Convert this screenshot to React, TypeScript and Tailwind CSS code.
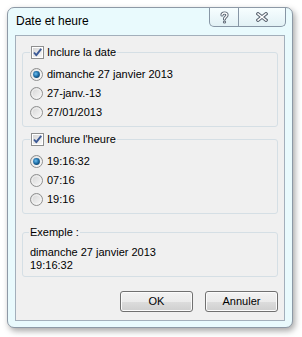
const dateFormats = ["dimanche 27 janvier 2013", "27-janv.-13", "27/01/2013"];
const timeFormats = ["19:16:32", "07:16", "19:16"];

function Radio({ checked }: { checked: boolean }) {
  return (
    <svg width="13" height="13" viewBox="0 0 13 13" className="shrink-0">
      <defs>
        <linearGradient id="radioFill" x1="0" y1="0" x2="1" y2="1">
          <stop offset="0" stopColor="#d2d2d2" />
          <stop offset="1" stopColor="#fbfbfb" />
        </linearGradient>
        <radialGradient id="radioDot" cx="0.4" cy="0.4" r="0.7">
          <stop offset="0" stopColor="#6ec0f0" />
          <stop offset="0.55" stopColor="#1f6fa8" />
          <stop offset="1" stopColor="#0d3f66" />
        </radialGradient>
      </defs>
      <circle cx="6.5" cy="6.5" r="6" fill="url(#radioFill)" stroke="#8e8f8f" />
      <circle cx="6.5" cy="6.5" r="4.5" fill="none" stroke="#f4f4f4" strokeWidth="0.8" />
      {checked && <circle cx="6.5" cy="6.5" r="3.4" fill="url(#radioDot)" />}
    </svg>
  );
}

function Checkbox() {
  return (
    <svg width="13" height="13" viewBox="0 0 13 13" className="shrink-0">
      <defs>
        <linearGradient id="checkFill" x1="0" y1="0" x2="1" y2="1">
          <stop offset="0" stopColor="#d6d6d6" />
          <stop offset="1" stopColor="#f8f8f8" />
        </linearGradient>
      </defs>
      <rect x="0.5" y="0.5" width="12" height="12" fill="#ffffff" stroke="#8e8f8f" />
      <rect x="2" y="2" width="9" height="9" fill="url(#checkFill)" />
      <path d="M3 6.5 L5.3 9.2 L10.2 2.8" fill="none" stroke="#3c5a96" strokeWidth="1.9" strokeLinejoin="round" />
    </svg>
  );
}

function HelpGlyph() {
  return (
    <svg width="9" height="13" viewBox="0 0 9 13">
      <path d="M2 4 C2 1.3 7 1.3 7 4 C7 6 4.5 6 4.5 8" fill="none" stroke="#5d6874" strokeWidth="3.2" strokeLinecap="round" />
      <circle cx="4.5" cy="11" r="1.6" fill="#5d6874" />
      <path d="M2 4 C2 1.3 7 1.3 7 4 C7 6 4.5 6 4.5 8" fill="none" stroke="#ffffff" strokeWidth="1.3" strokeLinecap="round" />
      <circle cx="4.5" cy="11" r="0.6" fill="#ffffff" />
    </svg>
  );
}

function CloseGlyph() {
  return (
    <svg width="12" height="10" viewBox="0 0 12 10">
      <path d="M2 1.8 L10 8.2 M10 1.8 L2 8.2" fill="none" stroke="#5d6874" strokeWidth="3.4" strokeLinecap="square" />
      <path d="M2 1.8 L10 8.2 M10 1.8 L2 8.2" fill="none" stroke="#ffffff" strokeWidth="1.4" strokeLinecap="square" />
    </svg>
  );
}

function DialogButton({ label }: { label: string }) {
  return (
    <button className="flex h-[21px] w-[73px] items-center justify-center rounded-[3px] border border-[#707070] bg-[linear-gradient(to_bottom,#f2f2f2_0%,#ebebeb_50%,#dddddd_50%,#cfcfcf_100%)] text-[11px] leading-[13px] text-black shadow-[inset_0_0_0_1px_#fbfbfb]">
      {label}
    </button>
  );
}

export default function App() {
  return (
    <div className="min-h-[337px] w-[302px] bg-white pl-[7px] pt-[7px] font-['Liberation_Sans',Arial,sans-serif]">
      <div className="flex h-[321px] w-[286px] flex-col rounded-[7px] border border-[#8d99a6] bg-[#e9fafd] px-[7px] pb-[6px] shadow-[2px_3px_6px_rgba(0,0,0,0.35)]">
        {/* Title bar */}
        <div className="flex h-[27px] shrink-0 items-start justify-between">
          <span className="pl-[1px] pt-[6px] text-[12px] leading-[15px] text-black">
            Date et heure
          </span>
          <div className="-mr-[1px] flex h-[19px] w-[77px] overflow-hidden rounded-b-[5px] border border-t-0 border-[#8796a5] bg-gradient-to-b from-[#f7feff] to-[#e2f1f5]">
            <div className="flex w-[28px] items-center justify-center">
              <HelpGlyph />
            </div>
            <div className="flex flex-1 items-center justify-center border-l border-[#8796a5]">
              <CloseGlyph />
            </div>
          </div>
        </div>

        {/* Client area */}
        <div className="flex flex-1 flex-col border border-[#a3afbb] bg-[#f0f0f0] px-[6px] pt-[10px] text-[11px] leading-[13px] text-black">
          <fieldset className="rounded-[3px] border border-[#d5dfe5] px-[7px] pb-[4px]">
            <legend className="px-[1px]">
              <span className="flex h-[13px] items-center gap-[3px]">
                <Checkbox />
                Inclure la date
              </span>
            </legend>
            <div className="flex flex-col pt-[6px]">
              {dateFormats.map((label, i) => (
                <div key={label} className="flex h-[19px] items-center gap-[4px]">
                  <Radio checked={i === 0} />
                  {label}
                </div>
              ))}
            </div>
          </fieldset>

          <fieldset className="mt-[6px] rounded-[3px] border border-[#d5dfe5] px-[7px] pb-[4px]">
            <legend className="px-[1px]">
              <span className="flex h-[13px] items-center gap-[3px]">
                <Checkbox />
                Inclure l'heure
              </span>
            </legend>
            <div className="flex flex-col pt-[6px]">
              {timeFormats.map((label, i) => (
                <div key={label} className="flex h-[19px] items-center gap-[4px]">
                  <Radio checked={i === 0} />
                  {label}
                </div>
              ))}
            </div>
          </fieldset>

          <fieldset className="mt-[12px] rounded-[3px] border border-[#d5dfe5] pl-[6px] pr-[7px] pb-[4px]">
            <legend className="px-[1px]">Exemple :</legend>
            <div className="pl-[1px] pt-[7px]">
              <div>dimanche 27 janvier 2013</div>
              <div>19:16:32</div>
            </div>
          </fieldset>

          <div className="mt-[14px] flex justify-end gap-[12px]">
            <DialogButton label="OK" />
            <DialogButton label="Annuler" />
          </div>
        </div>
      </div>
    </div>
  );
}
